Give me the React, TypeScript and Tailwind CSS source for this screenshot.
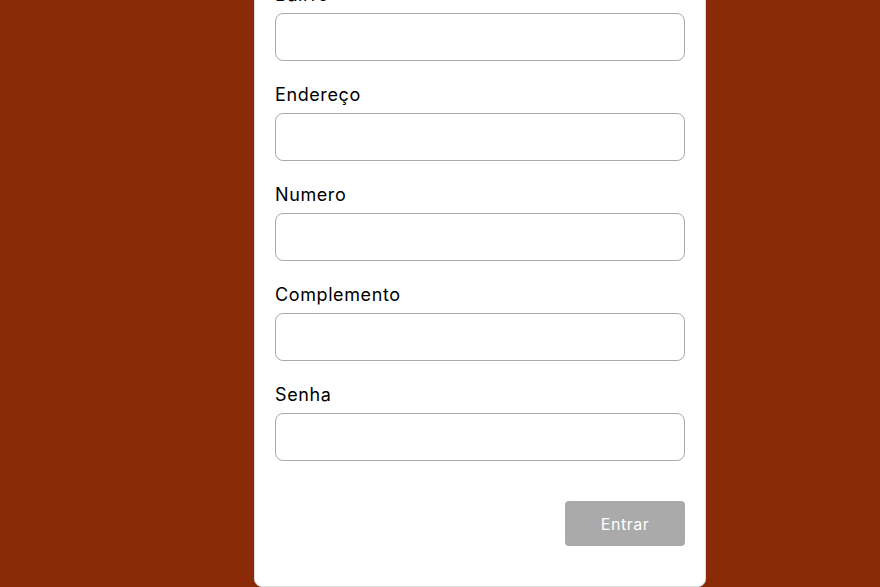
import React from "react";

const fields = ["Nome", "Email", "Telefone", "CEP", "Bairro", "Endereço", "Numero", "Complemento", "Senha"];

export default function App() {
  return (
    <div
      className="h-[587px] w-full overflow-hidden bg-[#8a2a06] flex justify-start items-end pl-[254px]"
      style={{ fontFamily: "Inter, 'Noto Sans', sans-serif" }}
    >
      <div className="w-[452px] shrink-0 bg-white border border-[#dcdcdc] rounded-b-[8px] rounded-t-[8px] px-5 pb-10 pt-6 flex flex-col">
        {fields.map((f) => (
          <div key={f} className="flex flex-col mb-[20px]">
            <label className="text-[18px] leading-[27px] tracking-[0.6px] text-black mb-[5px]">{f}</label>
            <input className="h-[48px] w-full border border-[#aaaaaa] rounded-[8px] outline-none px-3" />
          </div>
        ))}
        <div className="flex justify-end mt-[20px]">
          <button className="w-[120px] h-[45px] bg-[#aaaaaa] text-white text-[16px] tracking-[0.5px] rounded-[4px]">Entrar</button>
        </div>
      </div>
    </div>
  );
}
